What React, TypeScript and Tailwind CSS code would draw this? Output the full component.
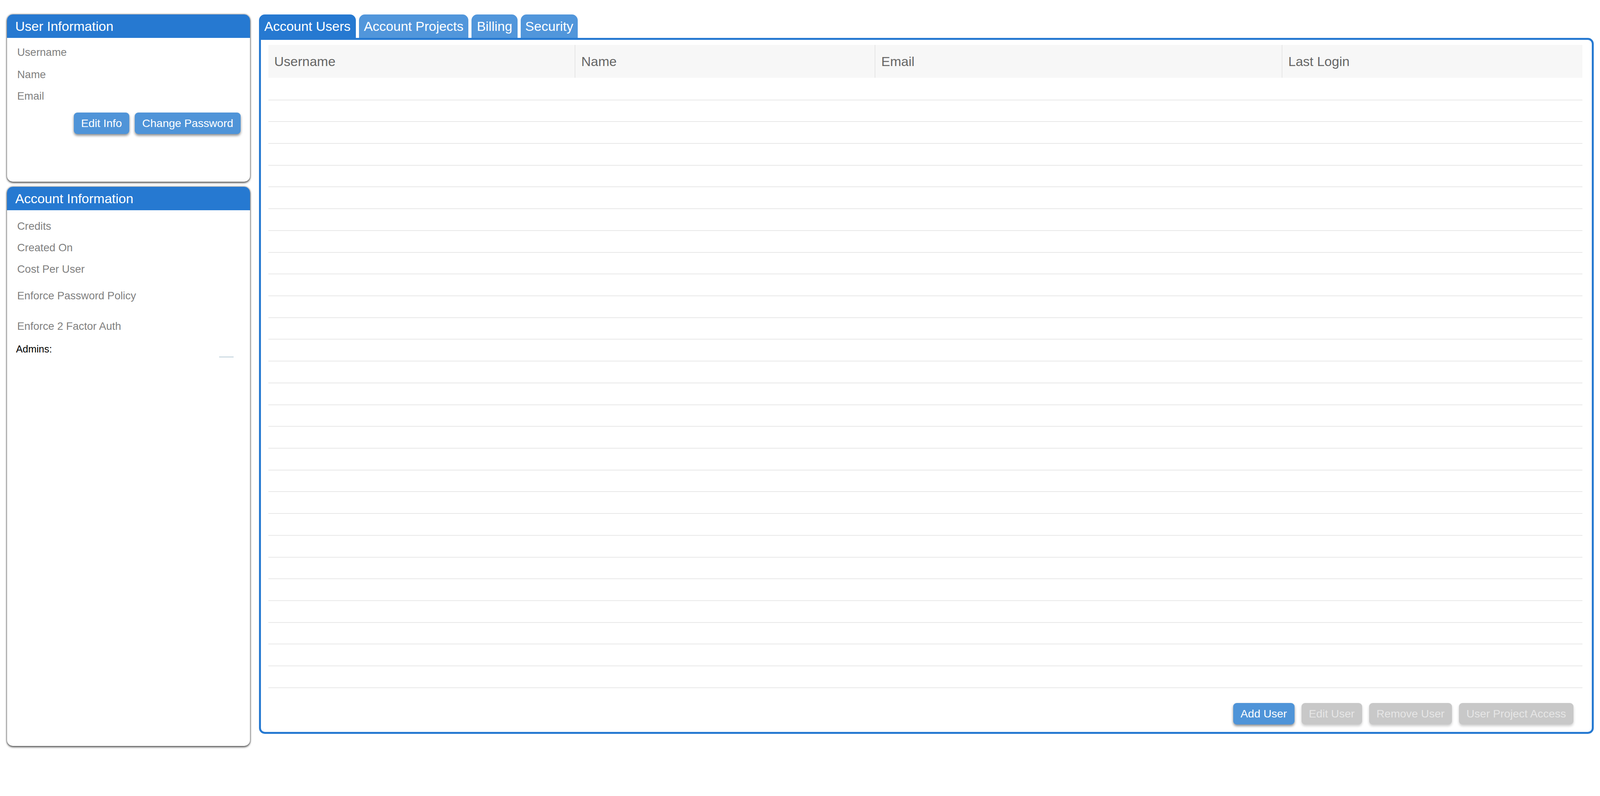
import React from "react";

const rows = Array.from({ length: 28 }, (_, i) => i);

function Card({
  title,
  className,
  children,
}: {
  title: string;
  className?: string;
  children?: React.ReactNode;
}) {
  return (
    <div
      className={
        "flex flex-col rounded-[15px] bg-white overflow-hidden shadow-[0_3px_5px_rgba(0,0,0,0.6),0_0_4px_rgba(0,0,0,0.6)] " +
        (className ?? "")
      }
    >
      <div className="h-[60px] shrink-0 bg-[#2679d1] pl-[21px] flex items-center text-white text-[34px] leading-none">
        {title}
      </div>
      {children}
    </div>
  );
}

function Label({ children, className }: { children: React.ReactNode; className?: string }) {
  return (
    <div className={"text-[27.5px] leading-[30px] text-[#7f7f7f] " + (className ?? "")}>{children}</div>
  );
}

function BlueButton({ children }: { children: React.ReactNode }) {
  return (
    <button className="h-[55px] px-[19px] rounded-[9px] bg-[#4f94d8] text-white text-[28.5px] shadow-[0_4px_6px_rgba(0,0,0,0.45)]">
      {children}
    </button>
  );
}

function GrayButton({ children }: { children: React.ReactNode }) {
  return (
    <button className="h-[55px] px-[19px] rounded-[9px] bg-[#c8c8c8] text-[#e6e6e6] text-[28.5px] shadow-[0_4px_6px_rgba(0,0,0,0.2)]">
      {children}
    </button>
  );
}

function Tab({ children, active, w }: { children: React.ReactNode; active?: boolean; w: string }) {
  return (
    <div
      className={
        w +
        " rounded-t-[15px] text-white text-[34px] flex items-center justify-center " +
        (active ? "bg-[#2679d1]" : "bg-[#5196db]")
      }
    >
      {children}
    </div>
  );
}

export default function App() {
  return (
    <div className="w-screen h-screen overflow-hidden bg-white flex gap-[23px] pl-[18px] pt-[37px] font-['Liberation_Sans',Arial,sans-serif]">
      {/* Left column */}
      <div className="w-[622px] shrink-0 flex flex-col gap-[13px]">
        <Card title="User Information" className="h-[428px]">
          <div className="flex flex-col pl-[26px] pt-[22px]">
            <Label>Username</Label>
            <Label className="mt-[27px]">Name</Label>
            <Label className="mt-[25px]">Email</Label>
          </div>
          <div className="flex justify-end gap-[14px] pr-[24px] mt-[27px]">
            <BlueButton>Edit Info</BlueButton>
            <BlueButton>Change Password</BlueButton>
          </div>
        </Card>
        <Card title="Account Information" className="h-[1431px]">
          <div className="flex flex-col pl-[26px] pt-[26px]">
            <Label>Credits</Label>
            <Label className="mt-[25px]">Created On</Label>
            <Label className="mt-[25px]">Cost Per User</Label>
            <Label className="mt-[38px]">Enforce Password Policy</Label>
            <Label className="mt-[48px]">Enforce 2 Factor Auth</Label>
            <div className="mt-[28px] -ml-[3px] text-[25.5px] leading-[30px] text-black">Admins:</div>
            <div className="flex justify-end pr-[42px] mt-[4px]">
              <div className="w-[37px] h-[3px] bg-[#cfdce4]" />
            </div>
          </div>
        </Card>
      </div>

      {/* Main */}
      <div className="w-[3417px] shrink-0 flex flex-col">
        <div className="flex gap-[8px] h-[60px]">
          <Tab active w="w-[248px]">Account Users</Tab>
          <Tab w="w-[280px]">Account Projects</Tab>
          <Tab w="w-[118px]">Billing</Tab>
          <Tab w="w-[146px]">Security</Tab>
        </div>
        <div className="h-[1781px] border-[5px] border-[#2679d1] rounded-[15px] rounded-tl-none flex flex-col pl-[19px] pr-[24px] pt-[13px] pb-[19px]">
          <div className="flex flex-col">
            <div className="h-[84px] bg-[#f7f7f7] flex text-[34px] text-[#666666]">
              <div className="w-[784px] flex items-center pl-[15px]">Username</div>
              <div className="w-[768px] flex items-center pl-[15px] border-l-2 border-[#e6e6e6]">Name</div>
              <div className="w-[1042px] flex items-center pl-[15px] border-l-2 border-[#e6e6e6]">Email</div>
              <div className="flex-1 flex items-center pl-[15px] border-l-2 border-[#e6e6e6]">Last Login</div>
            </div>
            {rows.map((r) => (
              <div
                key={r}
                className={
                  (r === 0 ? "h-[57.5px]" : "h-[55.72px]") + " border-b-2 border-[#e8e8e8]"
                }
              />
            ))}
          </div>
          <div className="mt-auto flex justify-end gap-[18px] pr-[23px]">
            <BlueButton>Add User</BlueButton>
            <GrayButton>Edit User</GrayButton>
            <GrayButton>Remove User</GrayButton>
            <GrayButton>User Project Access</GrayButton>
          </div>
        </div>
      </div>
    </div>
  );
}
